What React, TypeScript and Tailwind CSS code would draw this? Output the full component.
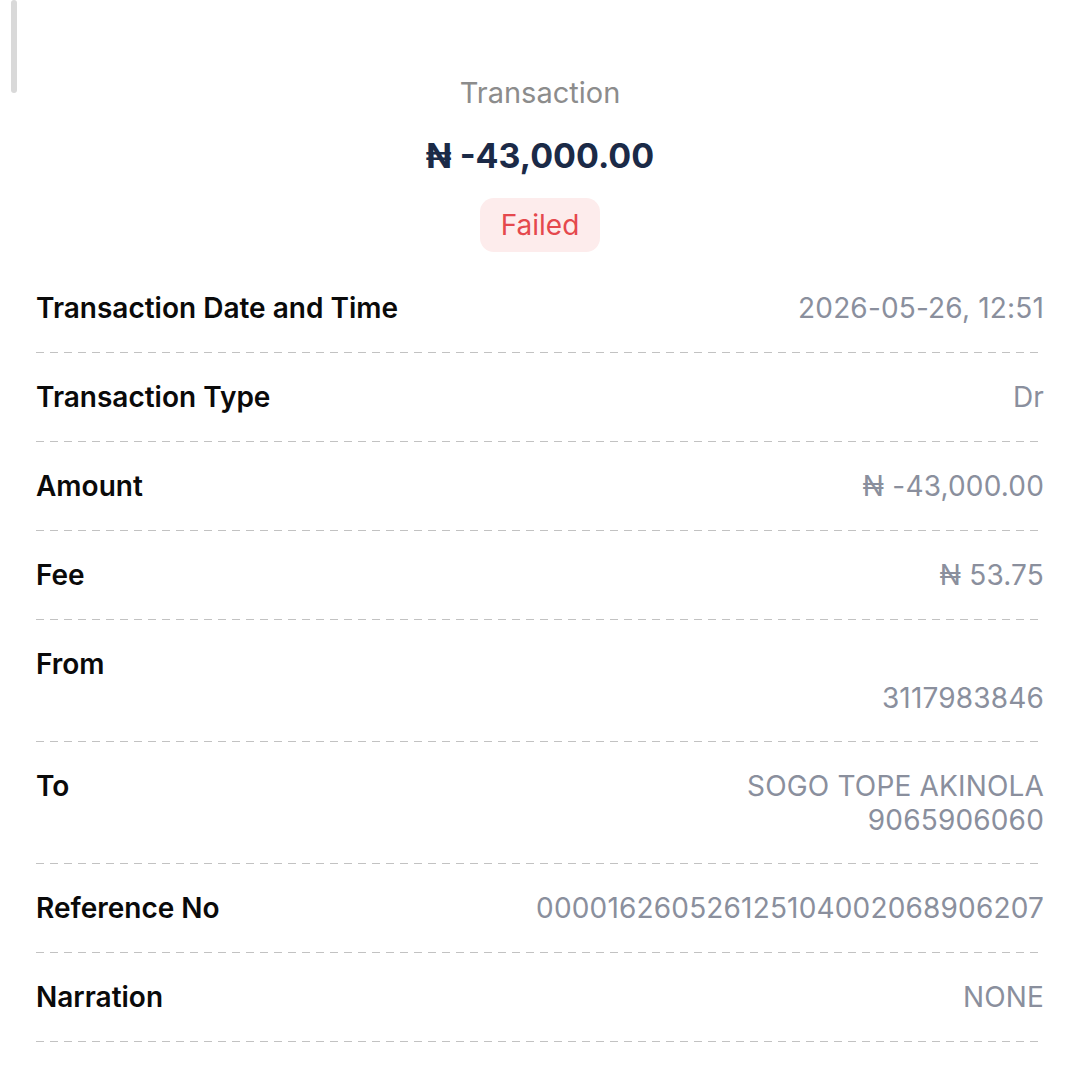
import React from "react";

type Row = { label: string; lines: string[] };

const rows: Row[] = [
  { label: "Transaction Date and Time", lines: ["2026-05-26, 12:51"] },
  { label: "Transaction Type", lines: ["Dr"] },
  { label: "Amount", lines: ["₦ -43,000.00"] },
  { label: "Fee", lines: ["₦ 53.75"] },
  { label: "From", lines: ["", "3117983846"] },
  { label: "To", lines: ["SOGO TOPE AKINOLA", "9065906060"] },
  { label: "Reference No", lines: ["000016260526125104002068906207"] },
  { label: "Narration", lines: ["NONE"] },
];

export default function App() {
  return (
    <div
      className="relative w-[1080px] h-[1080px] bg-white overflow-hidden"
      style={{ fontFamily: "Inter, 'Noto Sans', sans-serif" }}
    >
      <div className="absolute left-[11px] top-0 w-[6px] h-[93px] rounded-full bg-[#d9d9d9]" />
      <div className="flex flex-col items-center pt-[76px]">
        <div className="text-[29px] leading-[34px] text-[#8c8c8c]">Transaction</div>
        <div className="mt-[26px] text-[34px] leading-[40px] font-bold text-[#1b2a47]">
          ₦ -43,000.00
        </div>
        <div className="mt-[22px] h-[54px] px-[21px] flex items-center rounded-[14px] bg-[#fdecec] text-[28px] text-[#e5484d]">
          Failed
        </div>
      </div>
      <div className="mt-[12px] px-[36px] flex flex-col">
        {rows.map((r) => (
          <div key={r.label} className="flex flex-col">
            <div
              className={
                r.lines.length > 1
                  ? "flex justify-between items-start pt-[27px] pb-[26px]"
                  : "flex justify-between items-start pt-[27px] pb-[27px]"
              }
            >
              <div className="text-[28px] leading-[34px] font-semibold text-[#0a0a0a]">{r.label}</div>
              <div className="flex flex-col items-end text-right text-[28px] leading-[34px] tracking-[0.17px] text-[#8a8f9d]">
                {r.lines.map((l, i) => (
                  <div key={i} className="h-[34px]">
                    {l}
                  </div>
                ))}
              </div>
            </div>
            <div className="h-px w-full bg-[repeating-linear-gradient(to_right,#c2c2c2_0px,#c2c2c2_8px,transparent_8px,transparent_14px)]" />
          </div>
        ))}
      </div>
    </div>
  );
}
